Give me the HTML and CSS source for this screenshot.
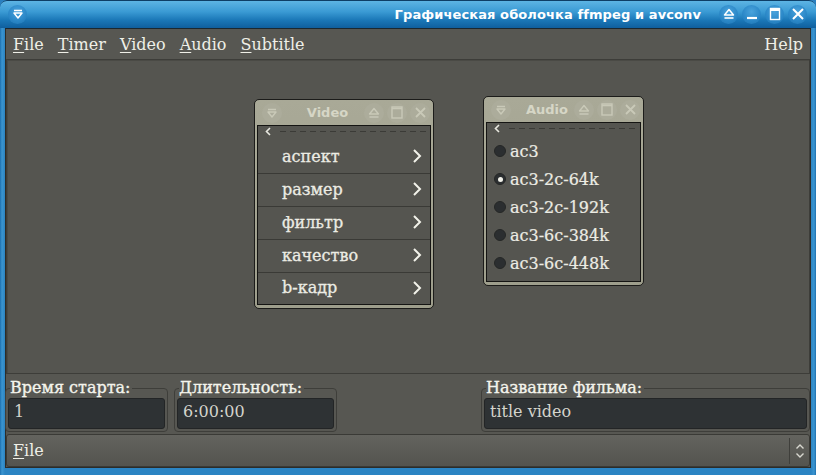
FILE: index.html
```html
<!DOCTYPE html>
<html>
<head>
<meta charset="utf-8">
<link rel="stylesheet" href="styles.css">
</head>
<body>
<div class="window">
  <div class="titlebar">
    <span class="tb-btn tb-menu"><svg width="12" height="12" viewBox="0 0 12 12"><path d="M2 2.5h8" stroke="#fff" stroke-width="1.6"/><path d="M2 5l4 5 4-5z" fill="none" stroke="#fff" stroke-width="1.5" stroke-linejoin="round"/></svg></span>
    <span class="title">Графическая оболочка ffmpeg и avconv</span>
    <span class="tb-btn"><svg width="12" height="12" viewBox="0 0 12 12"><path d="M6 1.5L10.5 7h-9z" fill="none" stroke="#fff" stroke-width="1.5" stroke-linejoin="round"/><path d="M1.5 10h9" stroke="#fff" stroke-width="1.6"/></svg></span>
    <span class="tb-btn"><svg width="12" height="12" viewBox="0 0 12 12"><path d="M1 10h10" stroke="#fff" stroke-width="2.2"/></svg></span>
    <span class="tb-btn"><svg width="12" height="14" viewBox="0 0 12 14"><rect x="1.5" y="1.5" width="9" height="11" fill="none" stroke="#fff" stroke-width="1.4"/><path d="M1.5 3h9" stroke="#fff" stroke-width="2"/></svg></span>
    <span class="tb-btn"><svg width="14" height="14" viewBox="0 0 14 14"><path d="M2 2l10 10M12 2L2 12" stroke="#fff" stroke-width="2"/></svg></span>
  </div>
  <div class="client">
    <div class="menubar">
      <span class="mi"><u>F</u>ile</span>
      <span class="mi"><u>T</u>imer</span>
      <span class="mi"><u>V</u>ideo</span>
      <span class="mi"><u>A</u>udio</span>
      <span class="mi"><u>S</u>ubtitle</span>
      <span class="mi help">Help</span>
    </div>
    <div class="workspace">
      <div class="subwin video-win">
        <div class="sw-title">
          <span class="sw-btn"><svg width="12" height="12" viewBox="0 0 12 12"><path d="M2 2.5h8" stroke="#c9c9b8" stroke-width="1.5"/><path d="M2 5l4 5 4-5z" fill="none" stroke="#c9c9b8" stroke-width="1.4" stroke-linejoin="round"/></svg></span>
          <span class="sw-name">Video</span>
          <span class="sw-btn"><svg width="12" height="12" viewBox="0 0 12 12"><path d="M6 1.5L10.5 7h-9z" fill="none" stroke="#c9c9b8" stroke-width="1.4" stroke-linejoin="round"/><path d="M1.5 10h9" stroke="#c9c9b8" stroke-width="1.5"/></svg></span>
          <span class="sw-btn"><svg width="12" height="13" viewBox="0 0 12 13"><rect x="1" y="1" width="10" height="11" fill="none" stroke="#c9c9b8" stroke-width="1.4"/><path d="M1 2.5h10" stroke="#c9c9b8" stroke-width="1.6"/></svg></span>
          <span class="sw-btn"><svg width="13" height="13" viewBox="0 0 13 13"><path d="M2 2l9 9M11 2l-9 9" stroke="#c9c9b8" stroke-width="1.8"/></svg></span>
        </div>
        <div class="sw-content">
          <div class="tearoff"><svg width="6" height="9" viewBox="0 0 6 9"><path d="M5 1L1.5 4.5 5 8" fill="none" stroke="#e8e8e0" stroke-width="1.6"/></svg><span class="dash"></span></div>
          <div class="mrow">аспект<svg class="chev" width="10" height="14" viewBox="0 0 10 14"><path d="M2 1l6 6-6 6" fill="none" stroke="#f2f2ea" stroke-width="2"/></svg></div>
          <div class="mrow">размер<svg class="chev" width="10" height="14" viewBox="0 0 10 14"><path d="M2 1l6 6-6 6" fill="none" stroke="#f2f2ea" stroke-width="2"/></svg></div>
          <div class="mrow">фильтр<svg class="chev" width="10" height="14" viewBox="0 0 10 14"><path d="M2 1l6 6-6 6" fill="none" stroke="#f2f2ea" stroke-width="2"/></svg></div>
          <div class="mrow">качество<svg class="chev" width="10" height="14" viewBox="0 0 10 14"><path d="M2 1l6 6-6 6" fill="none" stroke="#f2f2ea" stroke-width="2"/></svg></div>
          <div class="mrow last">b-кадр<svg class="chev" width="10" height="14" viewBox="0 0 10 14"><path d="M2 1l6 6-6 6" fill="none" stroke="#f2f2ea" stroke-width="2"/></svg></div>
        </div>
        <div class="sw-bottom"></div>
      </div>
      <div class="subwin audio-win">
        <div class="sw-title">
          <span class="sw-btn"><svg width="12" height="12" viewBox="0 0 12 12"><path d="M2 2.5h8" stroke="#c9c9b8" stroke-width="1.5"/><path d="M2 5l4 5 4-5z" fill="none" stroke="#c9c9b8" stroke-width="1.4" stroke-linejoin="round"/></svg></span>
          <span class="sw-name">Audio</span>
          <span class="sw-btn"><svg width="12" height="12" viewBox="0 0 12 12"><path d="M6 1.5L10.5 7h-9z" fill="none" stroke="#c9c9b8" stroke-width="1.4" stroke-linejoin="round"/><path d="M1.5 10h9" stroke="#c9c9b8" stroke-width="1.5"/></svg></span>
          <span class="sw-btn"><svg width="12" height="13" viewBox="0 0 12 13"><rect x="1" y="1" width="10" height="11" fill="none" stroke="#c9c9b8" stroke-width="1.4"/><path d="M1 2.5h10" stroke="#c9c9b8" stroke-width="1.6"/></svg></span>
          <span class="sw-btn"><svg width="13" height="13" viewBox="0 0 13 13"><path d="M2 2l9 9M11 2l-9 9" stroke="#c9c9b8" stroke-width="1.8"/></svg></span>
        </div>
        <div class="sw-content">
          <div class="tearoff"><svg width="6" height="9" viewBox="0 0 6 9"><path d="M5 1L1.5 4.5 5 8" fill="none" stroke="#e8e8e0" stroke-width="1.6"/></svg><span class="dash"></span></div>
          <div class="rrow"><span class="radio"></span>ac3</div>
          <div class="rrow"><span class="radio on"></span>ac3-2c-64k</div>
          <div class="rrow"><span class="radio"></span>ac3-2c-192k</div>
          <div class="rrow"><span class="radio"></span>ac3-6c-384k</div>
          <div class="rrow"><span class="radio"></span>ac3-6c-448k</div>
        </div>
        <div class="sw-bottom"></div>
      </div>
    </div>
    <div class="fields">
      <div class="group g1"><span class="glabel">Время старта:</span><div class="input">1</div></div>
      <div class="group g2"><span class="glabel">Длительность:</span><div class="input">6:00:00</div></div>
      <div class="group g3"><span class="glabel">Название фильма:</span><div class="input">title video</div></div>
    </div>
    <div class="combo">
      <span class="combo-text"><u>F</u>ile</span>
      <span class="spin"><svg width="10" height="16" viewBox="0 0 10 16"><path d="M1.5 5.5L5 2l3.5 3.5M1.5 10.5L5 14l3.5-3.5" fill="none" stroke="#d8d8d0" stroke-width="1.4"/></svg></span>
    </div>
  </div>
</div>
</body>
</html>
```

FILE: styles.css
```css
* { box-sizing: border-box; }
html, body { margin: 0; padding: 0; background: #2a7fbf; }
body { width: 816px; height: 475px; overflow: hidden; }

.window {
  width: 816px;
  height: 475px;
  display: flex;
  flex-direction: column;
  background: linear-gradient(90deg, #1d6fae 0, #3b95d0 2px, #2b84c3 5px, #2b84c3 811px, #3b95d0 814px, #1d6fae 816px);
  border-radius: 7px 7px 0 0;
  overflow: hidden;
}

.titlebar {
  height: 28px;
  flex: none;
  display: flex;
  align-items: center;
  padding: 0 9px 1px 8px;
  background: linear-gradient(#5db4e4 0, #3a9ad4 40%, #1b78b8 70%, #0f5f9e 100%);
  border-top: 1px solid #0e3e66;
  border-radius: 7px 7px 0 0;
}
.tb-btn {
  width: 19px;
  height: 19px;
  border-radius: 50%;
  display: flex;
  align-items: center;
  justify-content: center;
  background: radial-gradient(circle at 50% 35%, #4aa3dc, #2a87c7 60%, #1f74b1);
  margin-left: 4px;
  flex: none;
}
.tb-menu { margin-left: 0; }
.title {
  flex: 1;
  text-align: right;
  color: #ffffff;
  font-family: "DejaVu Sans", sans-serif;
  font-size: 13px;
  font-weight: bold;
  padding-right: 14px;
  letter-spacing: 0.1px;
}

.client {
  flex: 1;
  margin: 0 5px 7px 5px;
  background: #575752;
  border: 1px solid #2c2c29;
  border-top: 1px solid #1c2830;
  display: flex;
  flex-direction: column;
  font-family: "DejaVu Serif", serif;
  color: #efefe7;
}

.menubar {
  height: 30px;
  flex: none;
  display: flex;
  align-items: center;
  padding: 0 0 0 7px;
  font-size: 16px;
  gap: 14px;
}
.mi u { text-decoration: underline; text-underline-offset: 2px; }
.help { margin-left: auto; margin-right: 7px; }

.workspace {
  height: 315px;
  flex: none;
  position: relative;
  background: #555550;
  border: 1px solid #3d3d39;
  box-shadow: inset 1px 1px 0 #4a4a45;
}

.subwin {
  position: absolute;
  display: flex;
  flex-direction: column;
  background: linear-gradient(#a9a997, #9e9e8c);
  border: 1px solid #1c1c1a;
  border-radius: 5px;
  padding: 0 2px;
}
.video-win { left: 247px; top: 39px; width: 180px; height: 210px; }
.audio-win { left: 476px; top: 36px; width: 161px; height: 190px; }

.sw-title {
  height: 25px;
  flex: none;
  display: flex;
  align-items: center;
  padding: 0 1px 0 5px;
}
.sw-btn {
  width: 20px;
  height: 20px;
  border-radius: 50%;
  background: #acac9b;
  display: flex;
  align-items: center;
  justify-content: center;
  flex: none;
  margin-left: 3px;
}
.sw-btn:first-child { margin-left: 0; }
.sw-name {
  flex: 1;
  text-align: center;
  font-family: "DejaVu Sans", sans-serif;
  font-weight: bold;
  font-size: 13px;
  color: #d6d6c6;
  padding-left: 12px;
}

.sw-content {
  flex: 1;
  background: #555550;
  border: 1px solid #151513;
  display: flex;
  flex-direction: column;
}
.sw-bottom { height: 3px; flex: none; }

.tearoff {
  height: 15px;
  flex: none;
  display: flex;
  align-items: center;
  padding: 0 2px 4px 7px;
}
.dash {
  flex: 1;
  margin-left: 9px;
  height: 1px;
  background: repeating-linear-gradient(90deg, #3b3b37 0 6px, transparent 6px 10px);
}

.mrow {
  height: 33px;
  flex: none;
  display: flex;
  align-items: center;
  padding: 0 8px 2px 24px;
  font-size: 16px;
  color: #ececE4;
  border-bottom: 1px solid #3a3a36;
  -webkit-text-stroke: 0.3px #ececE4;
}
.mrow.last { border-bottom: none; height: 31px; }
.chev { margin-left: auto; }

.rrow {
  height: 28px;
  flex: none;
  display: flex;
  align-items: center;
  padding: 0 0 2px 7px;
  font-size: 16px;
  color: #ececE4;
  -webkit-text-stroke: 0.2px #ececE4;
}
.radio {
  width: 12px;
  height: 12px;
  border-radius: 50%;
  background: #2b2e30;
  border: 1px solid #252726;
  margin-right: 4px;
  flex: none;
  display: flex;
  align-items: center;
  justify-content: center;
}
.radio.on::after {
  content: "";
  width: 5px;
  height: 5px;
  border-radius: 50%;
  background: #f2f2ea;
}

.fields {
  height: 58px;
  flex: none;
  display: flex;
  padding: 14px 0 0 0;
}
.group {
  position: relative;
  height: 44px;
  border: 1px solid #3e3e3a;
  border-radius: 4px;
  padding: 9px 2px 2px 2px;
  display: flex;
  flex-direction: column;
}
.g1 { width: 163px; margin-left: -1px; }
.g2 { width: 163px; margin-left: 6px; }
.g3 { width: 329px; margin-left: auto; }
.glabel {
  position: absolute;
  left: 4px;
  top: -10px;
  font-size: 16px;
  line-height: 18px;
  background: #575752;
  padding-right: 2px;
  color: #f4f4ec;
  -webkit-text-stroke: 0.35px #f4f4ec;
}
.input {
  flex: 1;
  background: #2e3234;
  border: 1px solid #232526;
  border-radius: 3px;
  font-size: 16px;
  color: #d4d4cc;
  padding: 3px 0 0 5px;
}

.combo {
  height: 33px;
  flex: none;
  margin: 2px 0 0 0;
  border: 1px solid #3a3a36;
  border-radius: 3px;
  background: linear-gradient(#63635e, #54544f);
  display: flex;
  align-items: center;
  font-size: 16px;
}
.combo-text { padding-left: 6px; flex: 1; }
.combo-text u { text-underline-offset: 2px; }
.spin {
  width: 20px;
  height: 26px;
  border-left: 1px solid #3f3f3b;
  display: flex;
  align-items: center;
  justify-content: center;
}
```
